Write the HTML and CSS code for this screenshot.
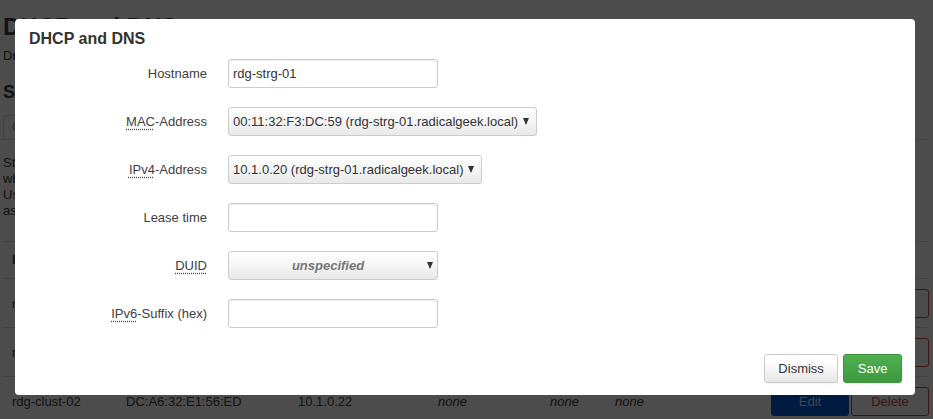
FILE: index.html
```html
<!DOCTYPE html>
<html lang="en">
<head>
  <meta charset="UTF-8"/>
  <meta name="viewport" content="width=device-width,initial-scale=1.0"/>
  <title>DHCP and DNS - LuCI</title>
  <link rel="stylesheet" href="styles.css">
</head>
<body>
  <div class="page">
    <h2 class="page-title">DHCP and DNS</h2>
    <div class="page-desc">Dnsmasq is a combined DHCP-Server and DNS-Forwarder for NAT firewalls</div>
    <h3 class="section-title">Server Settings</h3>
    <ul class="tabs">
      <li>General Settings</li>
      <li>Resolv and Hosts Files</li>
      <li>TFTP Settings</li>
      <li>Advanced Settings</li>
      <li class="active">Static Leases</li>
    </ul>
    <p class="section-desc">
      Static leases are used to assign fixed IP addresses and symbolic hostnames to DHCP clients. They are also required for static interfaces<br>
      where only hosts with a corresponding lease are served.<br>
      Use the Add Button to add a new lease entry. The MAC-Address identifies the host, the IPv4-Address specifies the fixed address,<br>
      as well as the Hostname assigned to the requesting host. The optional Lease time sets a host-specific lease time.
    </p>
    <table class="leases">
      <colgroup>
        <col style="width:114px"><col style="width:172px"><col style="width:140px">
        <col style="width:112px"><col style="width:65px"><col style="width:130px"><col>
      </colgroup>
      <tr>
        <th>Hostname</th><th>MAC-Address</th><th>IPv4-Address</th><th>Lease time</th><th>DUID</th><th>IPv6-Suffix (hex)</th><th></th>
      </tr>
      <tr>
        <td>rdg-strg-01</td><td>00:11:32:F3:DC:59</td><td>10.1.0.20</td><td><em>none</em></td><td><em>none</em></td><td><em>none</em></td>
        <td class="actions"><button class="btn-edit">Edit</button><button class="btn-delete">Delete</button></td>
      </tr>
      <tr>
        <td>rdg-clust-01</td><td>DC:A6:32:E1:56:EC</td><td>10.1.0.21</td><td><em>none</em></td><td><em>none</em></td><td><em>none</em></td>
        <td class="actions"><button class="btn-edit">Edit</button><button class="btn-delete">Delete</button></td>
      </tr>
      <tr>
        <td>rdg-clust-02</td><td>DC:A6:32:E1:56:ED</td><td>10.1.0.22</td><td><em>none</em></td><td><em>none</em></td><td><em>none</em></td>
        <td class="actions"><button class="btn-edit">Edit</button><button class="btn-delete">Delete</button></td>
      </tr>
    </table>
  </div>

  <div class="overlay">
    <div class="modal">
      <h4 class="modal-title">DHCP and DNS</h4>
      <div class="form">
        <div class="row">
          <label>Hostname</label>
          <div><input class="text" type="text" value="rdg-strg-01"></div>
        </div>
        <div class="row">
          <label><abbr>MAC</abbr>-Address</label>
          <div><span class="select-wrap"><select><option>00:11:32:F3:DC:59 (rdg-strg-01.radicalgeek.local)</option></select></span></div>
        </div>
        <div class="row">
          <label><abbr>IPv4</abbr>-Address</label>
          <div><span class="select-wrap"><select><option>10.1.0.20 (rdg-strg-01.radicalgeek.local)</option></select></span></div>
        </div>
        <div class="row">
          <label>Lease time</label>
          <div><input class="text" type="text"></div>
        </div>
        <div class="row">
          <label><abbr>DUID</abbr></label>
          <div><span class="select-wrap combo"><select class="placeholder"><option>unspecified</option></select></span></div>
        </div>
        <div class="row">
          <label><abbr>IPv6</abbr>-Suffix (hex)</label>
          <div><input class="text" type="text"></div>
        </div>
      </div>
      <div class="modal-footer">
        <button class="btn">Dismiss</button>
        <button class="btn btn-save">Save</button>
      </div>
    </div>
  </div>
</body>
</html>
```

FILE: styles.css
```css
*{margin:0;padding:0;box-sizing:border-box;}
html,body{background:#fff;}
body{font-family:'Liberation Sans',Arial,sans-serif;font-size:13px;color:#404040;overflow:hidden;}

.page{padding:13px 4px 0 3px;}
.page-title{font-size:24px;line-height:28px;font-weight:bold;color:#404040;}
.page-desc{margin-top:6px;line-height:18px;}
.section-title{margin-top:16px;font-size:18px;line-height:22px;font-weight:bold;}
.tabs{list-style:none;display:flex;margin-top:12px;border-bottom:1px solid #ddd;height:25px;}
.tabs li{padding:0 8px;line-height:22px;border:1px solid #ddd;border-bottom:0;border-radius:3px 3px 0 0;color:#999;margin-right:2px;}
.tabs li.active{color:#404040;}
.section-desc{margin-top:15px;line-height:16px;white-space:nowrap;}

.leases{margin-top:22px;width:100%;border-collapse:collapse;table-layout:fixed;}
.leases th{text-align:left;font-weight:bold;padding:10px 9px;line-height:16px;border-top:1px solid #ddd;white-space:nowrap;}
.leases td{padding:10px 9px 9px;line-height:16px;border-top:1px solid #ddd;white-space:nowrap;}
.leases td.actions{text-align:right;padding-right:0;font-size:0;}
.leases button{height:29px;min-width:78px;font-family:inherit;font-size:13px;border-radius:3px;padding:0 10px;}
.btn-edit{background:#0059d6;border:1px solid #0059d6;color:#dde8ff;margin-right:2px;}
.btn-delete{background:#fff;border:1px solid #c44;color:#c44;}

.overlay{position:fixed;inset:0;background:rgba(0,0,0,0.7);}
.modal{width:900px;margin:19px 0 0 15px;background:#fff;border-radius:4px;padding:11px 13px 12px 14px;}
.modal-title{font-size:16px;line-height:18px;font-weight:bold;color:#333;}
.form{margin-top:11px;display:flex;flex-direction:column;gap:19px;}
.row{display:grid;grid-template-columns:178px 1fr;column-gap:21px;align-items:center;}
.row label{text-align:right;color:#404040;}
abbr{text-decoration:underline dotted;text-underline-offset:3px;}

.text{width:210px;height:29px;border:1px solid #ccc;border-radius:3px;padding:0 4px;font-family:inherit;font-size:13px;color:#333;box-shadow:inset 0 1px 2px rgba(0,0,0,0.08);outline:none;}
.select-wrap{display:inline-block;position:relative;vertical-align:top;}
.select-wrap::after{content:'';position:absolute;right:8px;top:11px;border-style:solid;border-width:7px 3.5px 0;border-color:#333 transparent transparent;pointer-events:none;}
.select-wrap.combo::after{right:5px;}
select{appearance:none;-webkit-appearance:none;height:29px;border:1px solid #ccc;border-radius:3px;padding:0 17px 0 4px;font-family:inherit;font-size:13px;color:#333;background:linear-gradient(#fff,#fafafa 25%,#e9e9e9);outline:none;}
select.placeholder{width:210px;text-align:center;text-align-last:center;font-style:italic;font-weight:bold;color:#777;padding:0 14px 0 4px;}

.modal-footer{margin-top:26px;display:flex;justify-content:flex-end;gap:5px;}
.btn{height:29px;padding:0 13.5px;font-family:inherit;font-size:13px;color:#333;border:1px solid #ccc;border-radius:3px;background:linear-gradient(#fff,#fff 25%,#e6e6e6);box-shadow:0 1px 2px rgba(0,0,0,0.05);}
.btn-save{color:#fff;border-color:#3d923d;background:linear-gradient(#4fb04f,#3e983e);}
```
